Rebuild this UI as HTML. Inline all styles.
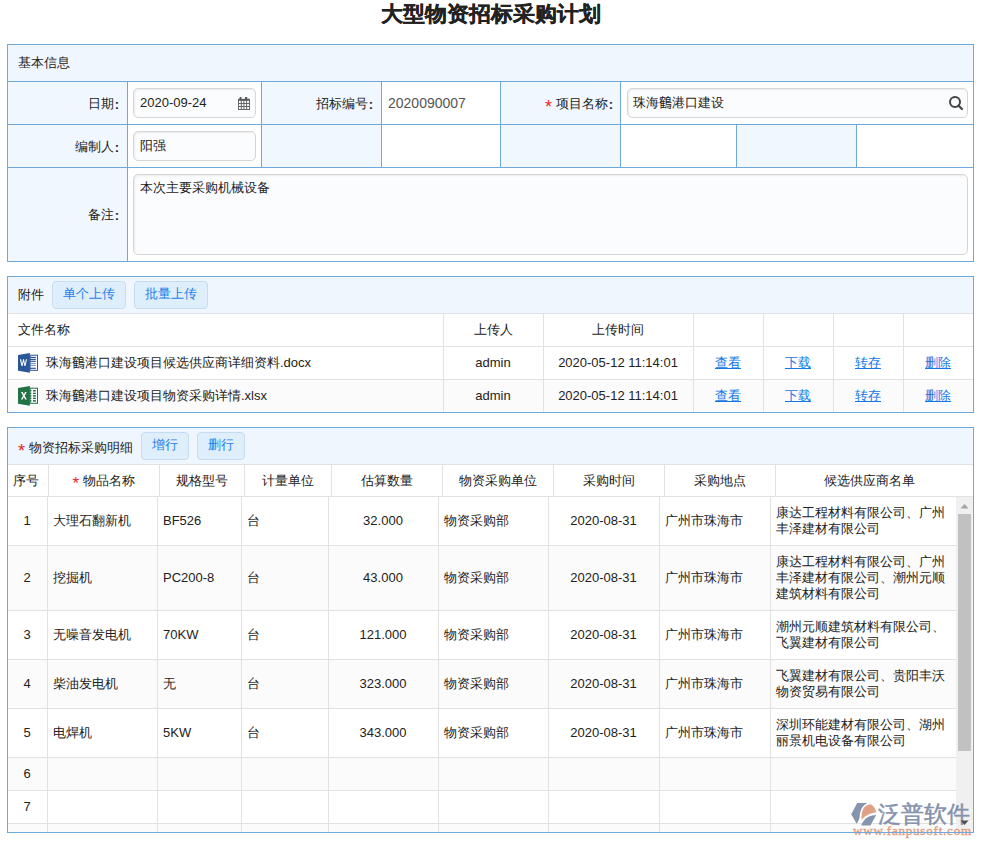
<!DOCTYPE html><html><head><meta charset="utf-8"><style>
html,body{margin:0;padding:0;background:#fff;}
body{width:981px;height:847px;overflow:hidden;position:relative;font-family:"Liberation Sans",sans-serif;font-size:13px;color:#222;}
.t{position:absolute;white-space:nowrap;overflow:visible;}
.inp{position:absolute;box-sizing:border-box;border:1px solid #d6d6d6;border-radius:5px;background:#fbfcfd;box-shadow:inset 1px 1px 2px rgba(0,0,0,.07);}
.btn{position:absolute;box-sizing:border-box;border:1px solid #c6dcf0;border-radius:4px;background:#dfeefb;color:#2480ea;text-align:center;}
.col{font-weight:bold;position:relative;top:1px;margin-left:1px;}
.lk{color:#1577e6;text-decoration:underline;}
.req{color:#f01e1e;display:inline-block;font-size:17px;line-height:10px;vertical-align:-4px;}
.req2{color:#f01e1e;display:inline-block;font-size:17px;line-height:10px;vertical-align:-4px;}
</style></head><body>
<div class="t" style="left:0px;top:0px;width:981px;height:30px;line-height:30px;text-align:center;font-size:22px;font-weight:bold;color:#222;transform:scaleY(0.96);transform-origin:0 3px;-webkit-text-stroke:0.3px #222;">大型物资招标采购计划</div>
<div style="position:absolute;left:7px;top:44px;width:967px;height:218px;background:#fff;"></div>
<div style="position:absolute;left:7px;top:44px;width:967px;height:37px;background:#f0f6fe;"></div>
<div style="position:absolute;left:7px;top:81px;width:120px;height:180px;background:#f0f7fe;"></div>
<div style="position:absolute;left:261px;top:81px;width:120px;height:86px;background:#f0f7fe;"></div>
<div style="position:absolute;left:500px;top:81px;width:120px;height:86px;background:#f0f7fe;"></div>
<div style="position:absolute;left:736px;top:124px;width:120px;height:43px;background:#f0f7fe;"></div>
<div style="position:absolute;left:7px;top:44px;width:967px;height:1px;background:#6fa8db;"></div>
<div style="position:absolute;left:7px;top:81px;width:967px;height:1px;background:#6fa8db;"></div>
<div style="position:absolute;left:7px;top:124px;width:967px;height:1px;background:#6fa8db;"></div>
<div style="position:absolute;left:7px;top:167px;width:967px;height:1px;background:#6fa8db;"></div>
<div style="position:absolute;left:7px;top:261px;width:967px;height:1px;background:#6fa8db;"></div>
<div style="position:absolute;left:7px;top:44px;width:1px;height:218px;background:#6fa8db;"></div>
<div style="position:absolute;left:973px;top:44px;width:1px;height:218px;background:#6fa8db;"></div>
<div style="position:absolute;left:127px;top:81px;width:1px;height:181px;background:#6fa8db;"></div>
<div style="position:absolute;left:261px;top:81px;width:1px;height:87px;background:#6fa8db;"></div>
<div style="position:absolute;left:381px;top:81px;width:1px;height:87px;background:#6fa8db;"></div>
<div style="position:absolute;left:500px;top:81px;width:1px;height:87px;background:#6fa8db;"></div>
<div style="position:absolute;left:620px;top:81px;width:1px;height:87px;background:#6fa8db;"></div>
<div style="position:absolute;left:736px;top:124px;width:1px;height:44px;background:#6fa8db;"></div>
<div style="position:absolute;left:856px;top:124px;width:1px;height:44px;background:#6fa8db;"></div>
<div class="t" style="left:18px;top:44px;width:200px;height:37px;line-height:37px;text-align:left;">基本信息</div>
<div class="t" style="left:7px;top:82px;width:112px;height:43px;line-height:43px;text-align:right;">日期<span class="col">:</span></div>
<div class="t" style="left:7px;top:125px;width:112px;height:43px;line-height:43px;text-align:right;">编制人<span class="col">:</span></div>
<div class="t" style="left:7px;top:168px;width:112px;height:94px;line-height:94px;text-align:right;">备注<span class="col">:</span></div>
<div class="t" style="left:261px;top:82px;width:112px;height:43px;line-height:43px;text-align:right;">招标编号<span class="col">:</span></div>
<div class="t" style="left:500px;top:82px;width:113px;height:43px;line-height:43px;text-align:right;"><span class="req" style="font-size:18px;vertical-align:-5px">*</span> 项目名称<span class="col">:</span></div>
<div class="t" style="left:388px;top:81px;width:110px;height:44px;line-height:44px;text-align:left;color:#555;font-size:14px;">2020090007</div>
<div class="inp" style="left:133px;top:88px;width:123px;height:30px;"></div>
<div class="t" style="left:140px;top:88px;width:100px;height:30px;line-height:30px;text-align:left;">2020-09-24</div>
<svg style="position:absolute;left:238px;top:97px" width="13" height="14" viewBox="0 0 13 14">
<rect x="1.6" y="0" width="1.8" height="2.5" fill="#555"/><rect x="7" y="0" width="2.2" height="2.5" fill="#555"/>
<rect x="0" y="1.8" width="12" height="2" fill="#555"/>
<g stroke="#666" stroke-width="1" fill="none">
<line x1="0.5" y1="2" x2="0.5" y2="13"/><line x1="3.3" y1="3" x2="3.3" y2="13"/><line x1="5.9" y1="3" x2="5.9" y2="13"/><line x1="8.6" y1="3" x2="8.6" y2="13"/><line x1="11.5" y1="2" x2="11.5" y2="13"/>
<line x1="0" y1="6.5" x2="12" y2="6.5"/><line x1="0" y1="9.5" x2="12" y2="9.5"/><line x1="0" y1="12.5" x2="12" y2="12.5"/>
</g>
</svg>
<div class="inp" style="left:627px;top:88px;width:341px;height:30px;"></div>
<div class="t" style="left:633px;top:88px;width:200px;height:30px;line-height:30px;text-align:left;">珠海<span lang="zh-TW">鶴</span>港口建设</div>
<svg style="position:absolute;left:948px;top:95px" width="16" height="16" viewBox="0 0 16 16">
<circle cx="7" cy="7" r="5" fill="none" stroke="#444" stroke-width="2"/>
<line x1="10.5" y1="10.5" x2="14" y2="14" stroke="#444" stroke-width="2.2" stroke-linecap="round"/>
</svg>
<div class="inp" style="left:133px;top:131px;width:123px;height:30px;"></div>
<div class="t" style="left:140px;top:131px;width:100px;height:30px;line-height:30px;text-align:left;">阳强</div>
<div class="inp" style="left:133px;top:174px;width:835px;height:81px;"></div>
<div class="t" style="left:140px;top:180px;width:300px;height:16px;line-height:16px;text-align:left;">本次主要采购机械设备</div>
<div style="position:absolute;left:7px;top:276px;width:967px;height:137px;background:#fff;"></div>
<div style="position:absolute;left:7px;top:276px;width:967px;height:37px;background:#f0f6fe;"></div>
<div style="position:absolute;left:7px;top:380px;width:967px;height:32px;background:#fbfbfb;"></div>
<div style="position:absolute;left:7px;top:313px;width:967px;height:1px;background:#e2e2e2;"></div>
<div style="position:absolute;left:7px;top:346px;width:967px;height:1px;background:#e2e2e2;"></div>
<div style="position:absolute;left:7px;top:379px;width:967px;height:1px;background:#e2e2e2;"></div>
<div style="position:absolute;left:443px;top:314px;width:1px;height:99px;background:#e2e2e2;"></div>
<div style="position:absolute;left:543px;top:314px;width:1px;height:99px;background:#e2e2e2;"></div>
<div style="position:absolute;left:693px;top:314px;width:1px;height:99px;background:#e2e2e2;"></div>
<div style="position:absolute;left:763px;top:314px;width:1px;height:99px;background:#e2e2e2;"></div>
<div style="position:absolute;left:833px;top:314px;width:1px;height:99px;background:#e2e2e2;"></div>
<div style="position:absolute;left:903px;top:314px;width:1px;height:99px;background:#e2e2e2;"></div>
<div style="position:absolute;left:7px;top:276px;width:967px;height:1px;background:#6fa8db;"></div>
<div style="position:absolute;left:7px;top:412px;width:967px;height:1px;background:#6fa8db;"></div>
<div style="position:absolute;left:7px;top:276px;width:1px;height:137px;background:#6fa8db;"></div>
<div style="position:absolute;left:973px;top:276px;width:1px;height:137px;background:#6fa8db;"></div>
<div class="t" style="left:18px;top:276px;width:60px;height:37px;line-height:37px;text-align:left;">附件</div>
<div class="btn" style="left:52px;top:281px;width:74px;height:28px;line-height:24px;">单个上传</div>
<div class="btn" style="left:134px;top:281px;width:74px;height:28px;line-height:24px;">批量上传</div>
<div class="t" style="left:18px;top:313px;width:200px;height:33px;line-height:33px;text-align:left;">文件名称</div>
<div class="t" style="left:443px;top:313px;width:100px;height:33px;line-height:33px;text-align:center;">上传人</div>
<div class="t" style="left:543px;top:313px;width:150px;height:33px;line-height:33px;text-align:center;">上传时间</div>
<svg style="position:absolute;left:18px;top:353px" width="21" height="21" viewBox="0 0 21 21">
<rect x="12" y="2.2" width="7.5" height="15.1" fill="#fff" stroke="#2b5797" stroke-width="1"/>
<g fill="#2b5797"><rect x="11.9" y="3.8" width="5.9" height="1.2"/><rect x="11.9" y="5.8" width="5.9" height="1.2"/><rect x="11.9" y="7.7" width="5.9" height="1.2"/>
<rect x="11.9" y="9.9" width="5.9" height="1.2" opacity="0.6"/><rect x="11.9" y="11.9" width="5.9" height="1.2" opacity="0.6"/><rect x="11.9" y="14.7" width="5.9" height="1.2"/></g>
<path d="M0 2 L11.9 0.1 L11.9 19.8 L0 17.8 Z" fill="#2b5797"/>
<path transform="translate(1.9,0) scale(0.87,1) translate(-1.9,0)" d="M1.9 6.2 L3.3 6.2 L4.4 11 L5.6 6.2 L6.6 6.2 L7.7 11 L8.8 6.2 L10.1 6.2 L8.3 13 L7.1 13 L6.1 8.7 L5 13 L3.7 13 Z" fill="#fff"/>
</svg>
<div class="t" style="left:46px;top:346px;width:390px;height:33px;line-height:33px;text-align:left;">珠海<span lang="zh-TW">鶴</span>港口建设项目候选供应商详细资料.docx</div>
<div class="t" style="left:443px;top:346px;width:100px;height:33px;line-height:33px;text-align:center;">admin</div>
<div class="t" style="left:543px;top:346px;width:150px;height:33px;line-height:33px;text-align:center;">2020-05-12 11:14:01</div>
<div class="t" style="left:693px;top:346px;width:70px;height:33px;line-height:33px;text-align:center;"><span class="lk">查看</span></div>
<div class="t" style="left:763px;top:346px;width:70px;height:33px;line-height:33px;text-align:center;"><span class="lk">下载</span></div>
<div class="t" style="left:833px;top:346px;width:70px;height:33px;line-height:33px;text-align:center;"><span class="lk">转存</span></div>
<div class="t" style="left:903px;top:346px;width:70px;height:33px;line-height:33px;text-align:center;"><span class="lk">删除</span></div>
<svg style="position:absolute;left:18px;top:386px" width="21" height="21" viewBox="0 0 21 21">
<rect x="12" y="2.2" width="7.5" height="15.1" fill="#fff" stroke="#217346" stroke-width="1"/>
<g fill="#217346"><rect x="11.9" y="4" width="1.5" height="1.5"/><rect x="15" y="4" width="2.8" height="1.5"/>
<rect x="11.9" y="6.7" width="1.5" height="1.4"/><rect x="15" y="6.7" width="2.8" height="1.4"/>
<rect x="11.9" y="9.1" width="1.5" height="1.5"/><rect x="15" y="9.1" width="2.8" height="1.5"/>
<rect x="11.9" y="11.6" width="1.5" height="1.4"/><rect x="15" y="11.6" width="2.8" height="1.4"/>
<rect x="11.9" y="14.1" width="1.5" height="1.6"/><rect x="15" y="14.1" width="2.8" height="1.6"/></g>
<path d="M0 2 L11.9 0.1 L11.9 19.8 L0 17.8 Z" fill="#217346"/>
<path d="M3 6.1 L4.7 6.1 L5.9 8.6 L7.1 6.1 L8.7 6.1 L6.7 9.8 L8.9 13.6 L7.1 13.6 L5.8 11 L4.5 13.6 L2.8 13.6 L5 9.8 Z" fill="#fff"/>
</svg>
<div class="t" style="left:46px;top:379px;width:390px;height:33px;line-height:33px;text-align:left;">珠海<span lang="zh-TW">鶴</span>港口建设项目物资采购详情.xlsx</div>
<div class="t" style="left:443px;top:379px;width:100px;height:33px;line-height:33px;text-align:center;">admin</div>
<div class="t" style="left:543px;top:379px;width:150px;height:33px;line-height:33px;text-align:center;">2020-05-12 11:14:01</div>
<div class="t" style="left:693px;top:379px;width:70px;height:33px;line-height:33px;text-align:center;"><span class="lk">查看</span></div>
<div class="t" style="left:763px;top:379px;width:70px;height:33px;line-height:33px;text-align:center;"><span class="lk">下载</span></div>
<div class="t" style="left:833px;top:379px;width:70px;height:33px;line-height:33px;text-align:center;"><span class="lk">转存</span></div>
<div class="t" style="left:903px;top:379px;width:70px;height:33px;line-height:33px;text-align:center;"><span class="lk">删除</span></div>
<div style="position:absolute;left:7px;top:427px;width:967px;height:406px;background:#fff;"></div>
<div style="position:absolute;left:7px;top:427px;width:967px;height:37px;background:#f0f6fe;"></div>
<div style="position:absolute;left:7px;top:464px;width:967px;height:1px;background:#e2e2e2;"></div>
<div style="position:absolute;left:7px;top:496px;width:967px;height:1px;background:#e2e2e2;"></div>
<div style="position:absolute;left:48px;top:465px;width:1px;height:31px;background:#e2e2e2;"></div>
<div style="position:absolute;left:159px;top:465px;width:1px;height:31px;background:#e2e2e2;"></div>
<div style="position:absolute;left:244px;top:465px;width:1px;height:31px;background:#e2e2e2;"></div>
<div style="position:absolute;left:331px;top:465px;width:1px;height:31px;background:#e2e2e2;"></div>
<div style="position:absolute;left:442px;top:465px;width:1px;height:31px;background:#e2e2e2;"></div>
<div style="position:absolute;left:553px;top:465px;width:1px;height:31px;background:#e2e2e2;"></div>
<div style="position:absolute;left:664px;top:465px;width:1px;height:31px;background:#e2e2e2;"></div>
<div style="position:absolute;left:775px;top:465px;width:1px;height:31px;background:#e2e2e2;"></div>
<div class="t" style="left:18px;top:429px;width:130px;height:37px;line-height:37px;text-align:left;"><span class="req" style="font-size:18px;margin-right:4px;vertical-align:-5px">*</span>物资招标采购明细</div>
<div class="btn" style="left:141px;top:432px;width:48px;height:28px;line-height:24px;">增行</div>
<div class="btn" style="left:197px;top:432px;width:48px;height:28px;line-height:24px;">删行</div>
<div class="t" style="left:5px;top:465px;width:41px;height:32px;line-height:32px;text-align:center;">序号</div>
<div class="t" style="left:48px;top:465px;width:111px;height:32px;line-height:32px;text-align:center;"><span class="req">*</span> 物品名称</div>
<div class="t" style="left:159px;top:465px;width:85px;height:32px;line-height:32px;text-align:center;">规格型号</div>
<div class="t" style="left:244px;top:465px;width:87px;height:32px;line-height:32px;text-align:center;">计量单位</div>
<div class="t" style="left:331px;top:465px;width:111px;height:32px;line-height:32px;text-align:center;">估算数量</div>
<div class="t" style="left:442px;top:465px;width:111px;height:32px;line-height:32px;text-align:center;">物资采购单位</div>
<div class="t" style="left:553px;top:465px;width:111px;height:32px;line-height:32px;text-align:center;">采购时间</div>
<div class="t" style="left:664px;top:465px;width:111px;height:32px;line-height:32px;text-align:center;">采购地点</div>
<div class="t" style="left:775px;top:465px;width:188px;height:32px;line-height:32px;text-align:center;">候选供应商名单</div>
<div style="position:absolute;left:7px;top:545px;width:949px;height:1px;background:#e2e2e2;"></div>
<div class="t" style="left:7px;top:496px;width:40px;height:49px;line-height:49px;text-align:center;">1</div>
<div class="t" style="left:53px;top:496px;width:98px;height:49px;line-height:49px;text-align:left;">大理石翻新机</div>
<div class="t" style="left:163px;top:496px;width:72px;height:49px;line-height:49px;text-align:left;">BF526</div>
<div class="t" style="left:247px;top:496px;width:75px;height:49px;line-height:49px;text-align:left;">台</div>
<div class="t" style="left:328px;top:496px;width:110px;height:49px;line-height:49px;text-align:center;">32.000</div>
<div class="t" style="left:444px;top:496px;width:98px;height:49px;line-height:49px;text-align:left;">物资采购部</div>
<div class="t" style="left:548px;top:496px;width:111px;height:49px;line-height:49px;text-align:center;">2020-08-31</div>
<div class="t" style="left:665px;top:496px;width:99px;height:49px;line-height:49px;text-align:left;">广州市珠海市</div>
<div class="t" style="left:776px;top:496px;width:174px;height:49px;display:flex;align-items:center;line-height:16px;white-space:normal;"><div>康达工程材料有限公司、广州<br>丰泽建材有限公司</div></div>
<div style="position:absolute;left:8px;top:546px;width:948px;height:64px;background:#fbfbfb;"></div>
<div style="position:absolute;left:7px;top:610px;width:949px;height:1px;background:#e2e2e2;"></div>
<div class="t" style="left:7px;top:545px;width:40px;height:65px;line-height:65px;text-align:center;">2</div>
<div class="t" style="left:53px;top:545px;width:98px;height:65px;line-height:65px;text-align:left;">挖掘机</div>
<div class="t" style="left:163px;top:545px;width:72px;height:65px;line-height:65px;text-align:left;">PC200-8</div>
<div class="t" style="left:247px;top:545px;width:75px;height:65px;line-height:65px;text-align:left;">台</div>
<div class="t" style="left:328px;top:545px;width:110px;height:65px;line-height:65px;text-align:center;">43.000</div>
<div class="t" style="left:444px;top:545px;width:98px;height:65px;line-height:65px;text-align:left;">物资采购部</div>
<div class="t" style="left:548px;top:545px;width:111px;height:65px;line-height:65px;text-align:center;">2020-08-31</div>
<div class="t" style="left:665px;top:545px;width:99px;height:65px;line-height:65px;text-align:left;">广州市珠海市</div>
<div class="t" style="left:776px;top:545px;width:174px;height:65px;display:flex;align-items:center;line-height:16px;white-space:normal;"><div>康达工程材料有限公司、广州<br>丰泽建材有限公司、潮州元顺<br>建筑材料有限公司</div></div>
<div style="position:absolute;left:7px;top:659px;width:949px;height:1px;background:#e2e2e2;"></div>
<div class="t" style="left:7px;top:610px;width:40px;height:49px;line-height:49px;text-align:center;">3</div>
<div class="t" style="left:53px;top:610px;width:98px;height:49px;line-height:49px;text-align:left;">无噪音发电机</div>
<div class="t" style="left:163px;top:610px;width:72px;height:49px;line-height:49px;text-align:left;">70KW</div>
<div class="t" style="left:247px;top:610px;width:75px;height:49px;line-height:49px;text-align:left;">台</div>
<div class="t" style="left:328px;top:610px;width:110px;height:49px;line-height:49px;text-align:center;">121.000</div>
<div class="t" style="left:444px;top:610px;width:98px;height:49px;line-height:49px;text-align:left;">物资采购部</div>
<div class="t" style="left:548px;top:610px;width:111px;height:49px;line-height:49px;text-align:center;">2020-08-31</div>
<div class="t" style="left:665px;top:610px;width:99px;height:49px;line-height:49px;text-align:left;">广州市珠海市</div>
<div class="t" style="left:776px;top:610px;width:174px;height:49px;display:flex;align-items:center;line-height:16px;white-space:normal;"><div>潮州元顺建筑材料有限公司、<br>飞翼建材有限公司</div></div>
<div style="position:absolute;left:8px;top:660px;width:948px;height:48px;background:#fbfbfb;"></div>
<div style="position:absolute;left:7px;top:708px;width:949px;height:1px;background:#e2e2e2;"></div>
<div class="t" style="left:7px;top:659px;width:40px;height:49px;line-height:49px;text-align:center;">4</div>
<div class="t" style="left:53px;top:659px;width:98px;height:49px;line-height:49px;text-align:left;">柴油发电机</div>
<div class="t" style="left:163px;top:659px;width:72px;height:49px;line-height:49px;text-align:left;">无</div>
<div class="t" style="left:247px;top:659px;width:75px;height:49px;line-height:49px;text-align:left;">台</div>
<div class="t" style="left:328px;top:659px;width:110px;height:49px;line-height:49px;text-align:center;">323.000</div>
<div class="t" style="left:444px;top:659px;width:98px;height:49px;line-height:49px;text-align:left;">物资采购部</div>
<div class="t" style="left:548px;top:659px;width:111px;height:49px;line-height:49px;text-align:center;">2020-08-31</div>
<div class="t" style="left:665px;top:659px;width:99px;height:49px;line-height:49px;text-align:left;">广州市珠海市</div>
<div class="t" style="left:776px;top:659px;width:174px;height:49px;display:flex;align-items:center;line-height:16px;white-space:normal;"><div>飞翼建材有限公司、贵阳丰沃<br>物资贸易有限公司</div></div>
<div style="position:absolute;left:7px;top:757px;width:949px;height:1px;background:#e2e2e2;"></div>
<div class="t" style="left:7px;top:708px;width:40px;height:49px;line-height:49px;text-align:center;">5</div>
<div class="t" style="left:53px;top:708px;width:98px;height:49px;line-height:49px;text-align:left;">电焊机</div>
<div class="t" style="left:163px;top:708px;width:72px;height:49px;line-height:49px;text-align:left;">5KW</div>
<div class="t" style="left:247px;top:708px;width:75px;height:49px;line-height:49px;text-align:left;">台</div>
<div class="t" style="left:328px;top:708px;width:110px;height:49px;line-height:49px;text-align:center;">343.000</div>
<div class="t" style="left:444px;top:708px;width:98px;height:49px;line-height:49px;text-align:left;">物资采购部</div>
<div class="t" style="left:548px;top:708px;width:111px;height:49px;line-height:49px;text-align:center;">2020-08-31</div>
<div class="t" style="left:665px;top:708px;width:99px;height:49px;line-height:49px;text-align:left;">广州市珠海市</div>
<div class="t" style="left:776px;top:708px;width:174px;height:49px;display:flex;align-items:center;line-height:16px;white-space:normal;"><div>深圳环能建材有限公司、湖州<br>丽景机电设备有限公司</div></div>
<div style="position:absolute;left:8px;top:758px;width:948px;height:32px;background:#fbfbfb;"></div>
<div style="position:absolute;left:7px;top:790px;width:949px;height:1px;background:#e2e2e2;"></div>
<div class="t" style="left:7px;top:757px;width:40px;height:33px;line-height:33px;text-align:center;">6</div>
<div style="position:absolute;left:7px;top:823px;width:949px;height:1px;background:#e2e2e2;"></div>
<div class="t" style="left:7px;top:790px;width:40px;height:33px;line-height:33px;text-align:center;">7</div>
<div style="position:absolute;left:8px;top:824px;width:948px;height:8px;background:#fbfbfb;"></div>
<div style="position:absolute;left:47px;top:497px;width:1px;height:335px;background:#e2e2e2;"></div>
<div style="position:absolute;left:157px;top:497px;width:1px;height:335px;background:#e2e2e2;"></div>
<div style="position:absolute;left:241px;top:497px;width:1px;height:335px;background:#e2e2e2;"></div>
<div style="position:absolute;left:328px;top:497px;width:1px;height:335px;background:#e2e2e2;"></div>
<div style="position:absolute;left:438px;top:497px;width:1px;height:335px;background:#e2e2e2;"></div>
<div style="position:absolute;left:548px;top:497px;width:1px;height:335px;background:#e2e2e2;"></div>
<div style="position:absolute;left:659px;top:497px;width:1px;height:335px;background:#e2e2e2;"></div>
<div style="position:absolute;left:770px;top:497px;width:1px;height:335px;background:#e2e2e2;"></div>
<div style="position:absolute;left:956px;top:497px;width:17px;height:335px;background:#f0f0f0;"></div>
<div style="position:absolute;left:958px;top:514px;width:13px;height:237px;background:#c1c1c1;"></div>
<svg style="position:absolute;left:960px;top:503px" width="9" height="6"><path d="M0.5 5.5 L4.5 1 L8.5 5.5 Z" fill="#a3a3a3"/></svg>
<div style="position:absolute;left:7px;top:427px;width:967px;height:1px;background:#6fa8db;"></div>
<div style="position:absolute;left:7px;top:832px;width:967px;height:1px;background:#6fa8db;"></div>
<div style="position:absolute;left:7px;top:427px;width:1px;height:406px;background:#6fa8db;"></div>
<div style="position:absolute;left:973px;top:427px;width:1px;height:406px;background:#6fa8db;"></div>
<svg style="position:absolute;left:846px;top:798px" width="38" height="32" viewBox="0 0 38 32">
<path d="M11.2 5 L21.3 5 C16 8 14 12 13.6 19.4 C13 22 11.5 24.5 10.5 25.6 L5.2 16.3 Z" fill="#8794ae"/>
<path d="M24.4 6.2 C27.5 7.5 29.5 10.5 30.4 14.3 C25 14.8 19.5 17.5 15.5 21.7 C15.3 17 15.8 13.5 17.5 10.5 C19 8 21.5 6.5 24.4 6.2 Z" fill="#e0a286"/>
<path d="M30.2 17.1 L24.4 27.5 L15.1 27.5 C17 23 19.5 20 22.5 18.7 C25 17.6 27.5 17.2 30.2 17.1 Z" fill="#8794ae"/>
</svg>
<div class="t" style="left:878px;top:800px;width:100px;height:28px;line-height:28px;text-align:left;font-size:23px;color:#8592ac;-webkit-text-stroke:0.5px #8592ac;">泛普软件</div>
<div class="t" style="left:853px;top:825px;width:130px;height:12px;line-height:12px;text-align:left;font-family:'Liberation Serif',serif;font-size:13px;letter-spacing:0.8px;color:#df9b7e;-webkit-text-stroke:0.35px #df9b7e;">www.fanpusoft.com</div>
<svg style="position:absolute;left:960px;top:820px" width="9" height="6"><path d="M0.5 0.5 L4.5 5 L8.5 0.5 Z" fill="#505050"/></svg>
<div style="position:absolute;left:7px;top:832px;width:967px;height:1px;background:#6fa8db;"></div>
</body></html>
